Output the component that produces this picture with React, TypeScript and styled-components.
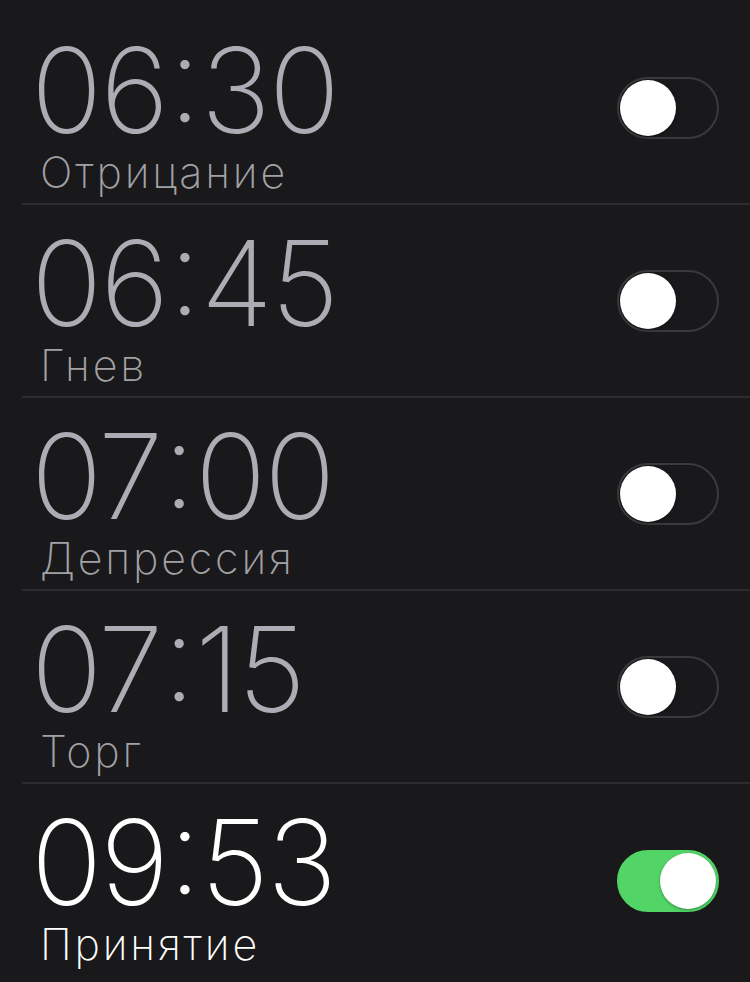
import React from "react";
import styled, { createGlobalStyle } from "styled-components";

const GlobalStyle = createGlobalStyle`
  html, body {
    margin: 0;
    padding: 0;
    background: #19191b;
  }
  body {
    font-family: Inter, "Noto Sans", sans-serif;
    -webkit-font-smoothing: antialiased;
  }
`;

const Screen = styled.main`
  width: 750px;
  height: 982px;
  overflow: hidden;
  background: #19191b;
  padding-top: 12px;
  box-sizing: border-box;
  display: flex;
  flex-direction: column;
`;

const Row = styled.section`
  height: 193px;
  margin-left: 22px;
  padding: 0 31px 0 9px;
  box-sizing: border-box;
  display: flex;
  align-items: center;
  justify-content: space-between;
  border-bottom: 2px solid #2c2c2e;

  &:last-child {
    border-bottom: none;
  }
`;

const Info = styled.div`
  display: flex;
  flex-direction: column;
  align-self: flex-start;
  padding-top: 19px;
`;

const Time = styled.div<{ $on: boolean }>`
  font-family: Inter, "Noto Sans", sans-serif;
  font-weight: 200;
  font-size: 118px;
  line-height: 118px;
  letter-spacing: -2px;
  white-space: nowrap;
  color: ${(p) => (p.$on ? "#ffffff" : "#adacb4")};
`;

const Colon = styled.span`
  font-feature-settings: "tnum" 1, "case" 1;
  margin: 0 2px;
`;

const Label = styled.div<{ $on: boolean }>`
  font-family: Inter, "Noto Sans", sans-serif;
  font-weight: 250;
  font-size: 43px;
  line-height: 42px;
  letter-spacing: 2.8px;
  margin: 2px 0 0 9px;
  color: ${(p) => (p.$on ? "#ffffff" : "#a2a2a6")};
`;

const Track = styled.div<{ $on: boolean }>`
  width: 102px;
  height: 62px;
  border-radius: 31px;
  box-sizing: border-box;
  border: 2px solid ${(p) => (p.$on ? "#52d566" : "#3a3a3c")};
  background: ${(p) => (p.$on ? "#52d566" : "transparent")};
  display: flex;
  align-items: center;
  justify-content: ${(p) => (p.$on ? "flex-end" : "flex-start")};
  padding: 0 1px;
`;

const Knob = styled.div`
  width: 56px;
  height: 56px;
  border-radius: 50%;
  background: #ffffff;
  box-shadow: 0 1px 3px rgba(0, 0, 0, 0.35);
`;

const alarms = [
  { time: "06:30", label: "Отрицание", on: false },
  { time: "06:45", label: "Гнев", on: false },
  { time: "07:00", label: "Депрессия", on: false },
  { time: "07:15", label: "Торг", on: false },
  { time: "09:53", label: "Принятие", on: true },
];

export default function App() {
  return (
    <>
      <GlobalStyle />
      <Screen>
        {alarms.map((a) => {
          const [h, m] = a.time.split(":");
          return (
            <Row key={a.time}>
              <Info>
                <Time $on={a.on}>
                  {h}
                  <Colon>:</Colon>
                  {m}
                </Time>
                <Label $on={a.on}>{a.label}</Label>
              </Info>
              <Track $on={a.on}>
                <Knob />
              </Track>
            </Row>
          );
        })}
      </Screen>
    </>
  );
}
